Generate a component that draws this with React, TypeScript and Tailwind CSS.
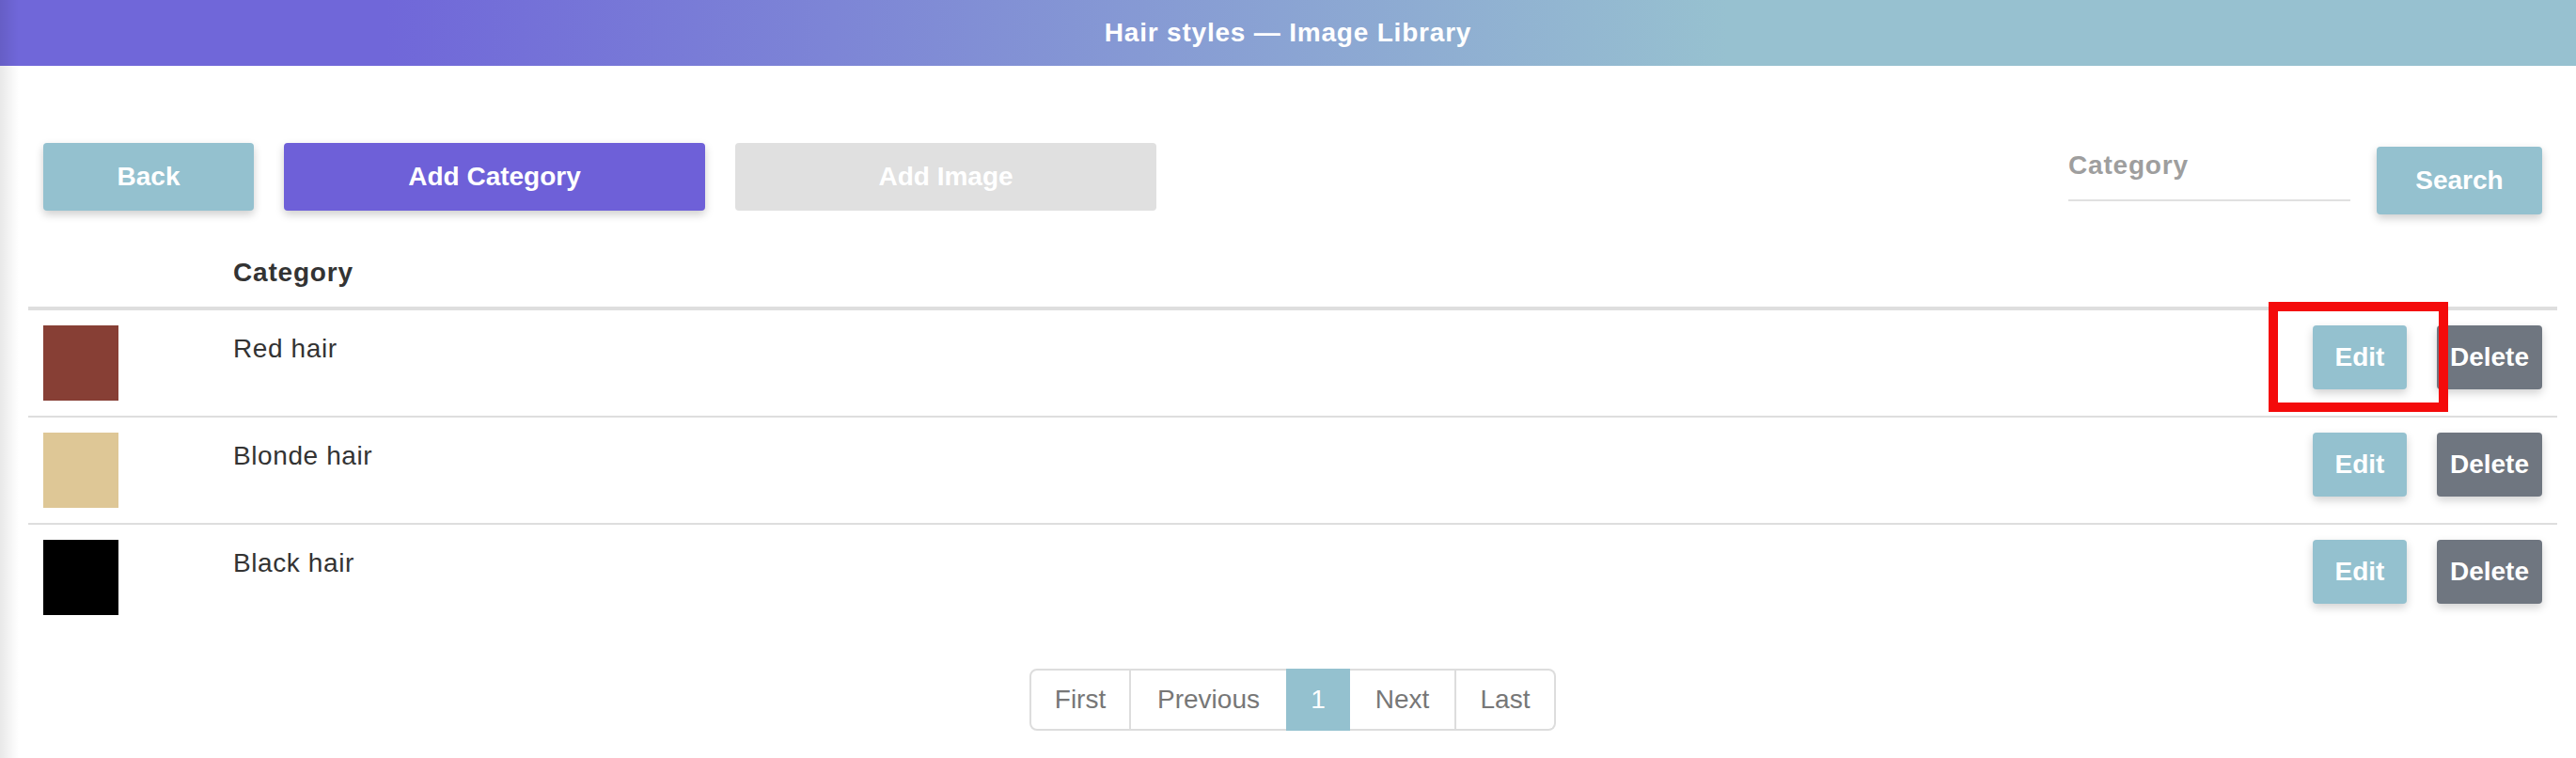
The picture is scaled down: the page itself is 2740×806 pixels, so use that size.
import React from 'react';

type HairColor = { name: string; swatch: string };

const colors: HairColor[] = [
  { name: 'Red hair', swatch: 'bg-[#873f35]' },
  { name: 'Blonde hair', swatch: 'bg-[#dec796]' },
  { name: 'Black hair', swatch: 'bg-[#000000]' },
];

function Row({ item, last, highlight }: { item: HairColor; last: boolean; highlight: boolean }) {
  return (
    <div className={`flex items-start ${last ? '' : 'border-b-2 border-[#dedede]'}`}>
      <div className="w-[202px] pl-[16px] py-[16px]">
        <div className={`w-[80px] h-[80px] ${item.swatch}`} />
      </div>
      <div className="pl-[16px] pt-[20px] text-[28px] leading-[42px] text-[#333333] tracking-[0.6px]">
        {item.name}
      </div>
      <div className="ml-auto pr-[16px] pt-[16px] flex gap-[32px]">
        <div className="relative">
          <button className="w-[100px] h-[68px] rounded-[4px] bg-[#94c1cf] text-white font-bold text-[28px] shadow-[0_4px_10px_rgba(0,0,0,0.18)]">
            Edit
          </button>
          {highlight && (
            // annotation frame drawn over the first row's Edit button
            <div className="absolute -left-[47px] -top-[25px] w-[191px] h-[117px] border-[10px] border-[#f40b0b] z-10 pointer-events-none" />
          )}
        </div>
        <button className="w-[112px] h-[68px] rounded-[4px] bg-[#6f7680] text-white font-bold text-[28px] shadow-[0_4px_10px_rgba(0,0,0,0.18)]">
          Delete
        </button>
      </div>
    </div>
  );
}

function Pagination() {
  return (
    <div className="mt-[41px] flex justify-center">
      <div className="flex text-[28px] text-[#777777]">
        <div className="w-[108px] h-[66px] flex items-center justify-center border-2 border-[#dddddd] rounded-l-[8px]">First</div>
        <div className="w-[165px] h-[66px] flex items-center justify-center border-y-2 border-[#dddddd]">Previous</div>
        <div className="w-[68px] h-[66px] flex items-center justify-center bg-[#94c1cf] text-white">1</div>
        <div className="w-[113px] h-[66px] flex items-center justify-center border-y-2 border-r-2 border-[#dddddd]">Next</div>
        <div className="w-[106px] h-[66px] flex items-center justify-center border-y-2 border-r-2 border-[#dddddd] rounded-r-[8px]">Last</div>
      </div>
    </div>
  );
}

export default function App() {
  return (
    <div className="relative min-h-[806px] bg-white font-['Liberation_Sans',Arial,sans-serif] overflow-hidden">
      {/* Title bar */}
      <header className="h-[70px] flex items-center justify-center bg-[linear-gradient(to_right,#7067d9_15%,#97c1d0_67%)]">
        <h1 className="text-white font-bold text-[28px] tracking-[0.8px]">Hair styles — Image Library</h1>
      </header>

      <main className="pl-[30px] pr-[20px]">
        {/* Toolbar */}
        <div className="flex items-start px-[16px] pt-[82px]">
          <button className="w-[224px] h-[72px] rounded-[4px] bg-[#94c1cf] text-white font-bold text-[28px] shadow-[0_4px_10px_rgba(0,0,0,0.2)]">
            Back
          </button>
          <button className="ml-[32px] w-[448px] h-[72px] rounded-[4px] bg-[#6e60d8] text-white font-bold text-[28px] shadow-[0_4px_10px_rgba(0,0,0,0.2)]">
            Add Category
          </button>
          <button className="ml-[32px] w-[448px] h-[72px] rounded-[4px] bg-[#e0e0e0] text-white font-bold text-[28px]">
            Add Image
          </button>
          <div className="ml-auto flex items-start gap-[28px]">
            <input
              placeholder="Category"
              className="w-[300px] h-[62px] pb-[12px] border-b-2 border-[#e0e0e0] outline-none bg-transparent text-[28px] font-bold tracking-[0.8px] text-[#333333] placeholder:text-[#9e9e9e]"
            />
            <button className="mt-[4px] w-[176px] h-[72px] rounded-[4px] bg-[#94c1cf] text-white font-bold text-[28px] shadow-[0_4px_10px_rgba(0,0,0,0.2)]">
              Search
            </button>
          </div>
        </div>

        {/* Table header */}
        <div className="flex border-b-4 border-[#dedede] pt-[41px] pb-[15px]">
          <div className="w-[202px]" />
          <div className="pl-[16px] text-[28px] leading-[42px] font-bold text-[#333333] tracking-[0.8px]">Category</div>
        </div>

        {colors.map((c, i) => (
          <Row key={c.name} item={c} last={i === colors.length - 1} highlight={i === 0} />
        ))}

        <Pagination />
      </main>

      {/* soft shadow on the left edge */}
      <div className="absolute left-0 top-0 h-full w-[20px] pointer-events-none bg-[linear-gradient(to_right,rgba(0,0,0,0.09),rgba(0,0,0,0))]" />
    </div>
  );
}
